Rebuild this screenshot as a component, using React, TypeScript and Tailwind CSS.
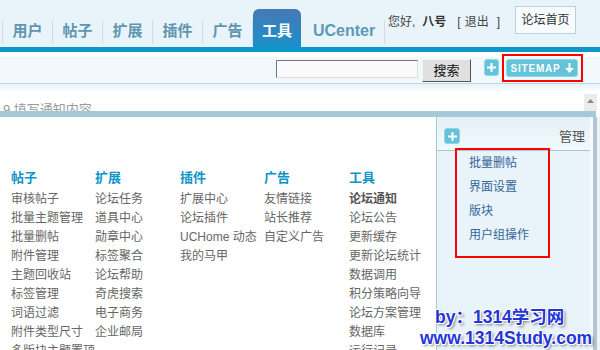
const tabs = ["用户", "帖子", "扩展", "插件", "广告"];

const columns = [
  {
    title: "帖子",
    items: ["审核帖子", "批量主题管理", "批量删帖", "附件管理", "主题回收站", "标签管理", "词语过滤", "附件类型尺寸", "多版块主题置顶"],
  },
  {
    title: "扩展",
    items: ["论坛任务", "道具中心", "勋章中心", "标签聚合", "论坛帮助", "奇虎搜索", "电子商务", "企业邮局"],
  },
  { title: "插件", items: ["扩展中心", "论坛插件", "UCHome 动态", "我的马甲"] },
  { title: "广告", items: ["友情链接", "站长推荐", "自定义广告"] },
  {
    title: "工具",
    items: ["论坛通知", "论坛公告", "更新缓存", "更新论坛统计", "数据调用", "积分策略向导", "论坛方案管理", "数据库", "运行记录"],
  },
];

const panelLinks = ["批量删帖", "界面设置", "版块", "用户组操作"];

function PlusIcon() {
  return (
    <svg width="9" height="9" viewBox="0 0 9 9">
      <rect x="3.5" y="0" width="2" height="9" fill="#fff" />
      <rect x="0" y="3.5" width="9" height="2" fill="#fff" />
    </svg>
  );
}

function Separator() {
  return <span className="mt-[20px] h-[24px] w-px bg-[#cfdde6]" />;
}

function Header() {
  return (
    <div className="flex h-[47px] bg-[#e9f4fa] pl-[2px]">
      {tabs.map((tab) => (
        <div key={tab} className="flex">
          <Separator />
          <div className="flex h-full w-[49px] items-center justify-center pt-[15px] text-[15px] font-bold text-[#6096b0]">
            {tab}
          </div>
        </div>
      ))}
      <Separator />
      <div className="mt-[9px] flex h-[38px] w-[48px] items-center justify-center rounded-t-[6px] bg-[linear-gradient(#4679b6,#1a90ca)] pt-[6px] text-[15px] font-bold text-white">
        工具
      </div>
      <div className="ml-[12px] flex w-[71px] items-center pt-[15px] text-[16px] font-bold text-[#5d9ab5]">UCenter</div>
      <Separator />
      <div className="ml-[3px] mt-[13px] flex h-[17px] items-center whitespace-nowrap text-[12px] text-[#444]">
        <span>您好,</span>
        <b className="ml-[7px] text-[#333]">八号</b>
        <span className="ml-[11px]">[</span>
        <span className="ml-[4px]">退出</span>
        <span className="ml-[8px]">]</span>
      </div>
      <div className="ml-[15px] mt-[6px] flex h-[28px] w-[61px] items-center justify-center border border-[#b3d2de] bg-[#f7fbfd] text-[12px] text-[#333]">
        论坛首页
      </div>
    </div>
  );
}

function Toolbar() {
  return (
    <div className="flex h-[31px] items-start justify-end bg-[linear-gradient(#fff_0_5px,#f0f8fc_5px)] pr-[17px]">
      <div className="mt-[8px] h-[18px] w-[142px] border border-t-[#777] border-l-[#777] border-b-[#ddd] border-r-[#ddd] bg-[#fafafa]" />
      <div className="ml-[4px] mt-[7px] flex h-[23px] w-[49px] items-center justify-center border border-t-[#f4f4f4] border-l-[#f4f4f4] border-b-[#555] border-r-[#555] bg-[#e0e0e0] text-[13px] text-[#111]">
        搜索
      </div>
      <div className="ml-[13px] mt-[7px] flex h-[17px] w-[15px] items-center justify-center rounded-[3px] border border-[#8fd6e6] bg-[#62c3d9]">
        <PlusIcon />
      </div>
      <div className="ml-[3px] mt-[2px] h-[28px] w-[81px] border-2 border-[#ff0000] pl-[2px] pt-[3px]">
        <div className="flex h-[18px] w-[72px] items-center justify-center gap-[4px] rounded-[3px] border border-[#8fd6e6] bg-[#62c3d9]">
          <span className="text-[10px] font-bold tracking-[0.8px] text-white">SITEMAP</span>
          <svg width="9" height="10" viewBox="0 0 9 10">
            <rect x="3.5" y="0" width="2" height="6" fill="#fff" />
            <path d="M0 5 H9 L4.5 10 Z" fill="#fff" />
          </svg>
        </div>
      </div>
    </div>
  );
}

function Notice() {
  return (
    <>
      <div className="h-px bg-[#c3d5e1]" />
      <div className="h-[8px] bg-[linear-gradient(#e5f1f8,#fff)]" />
      <div className="flex h-[19px] justify-between overflow-hidden">
        <div className="pl-[3px] pt-[11px] text-[13px] leading-[13px] text-[#9a9a9a]">9 填写通知内容</div>
        <div className="mr-[3px] mt-[2px] flex h-[17px] w-[13px] justify-center bg-[#ececec] pt-[5px]">
          <svg width="7" height="4" viewBox="0 0 7 4">
            <path d="M0 4 L3.5 0 L7 4 Z" fill="#8a8a8a" />
          </svg>
        </div>
      </div>
      <div className="mr-[4px] h-[6px] bg-[#a7c8d7]" />
    </>
  );
}

function SitemapGrid() {
  return (
    <div className="grid w-[436px] grid-cols-[84px_85px_84px_85px_1fr] pl-[11px] pt-[51px]">
      {columns.map((col) => (
        <div key={col.title} className="flex flex-col whitespace-nowrap">
          <div className="mb-[3px] text-[13px] font-bold leading-[19px] text-[#0e94c8]">{col.title}</div>
          {col.items.map((item) => (
            <div
              key={item}
              className={
                item === "论坛通知"
                  ? "text-[12px] font-bold leading-[19px] text-[#555]"
                  : "text-[12px] leading-[19px] text-[#666]"
              }
            >
              {item}
            </div>
          ))}
        </div>
      ))}
    </div>
  );
}

function ManagePanel() {
  return (
    <div className="flex w-[154px] flex-col border-l border-[#a7c8d7] bg-[#e8f3fa]">
      <div className="flex h-[34px] items-start justify-between border-b border-[#a7c8d7] bg-[linear-gradient(#e4f0f7,#f2f9fc)] pl-[7px] pr-[5px]">
        <div className="mt-[11px] flex h-[16px] w-[16px] items-center justify-center rounded-[3px] border border-[#8fd6e6] bg-[#62c3d9]">
          <PlusIcon />
        </div>
        <span className="mt-[10px] text-[13px] text-[#555]">管理</span>
      </div>
      <div className="-mt-[3px] ml-[18px] h-[110px] w-[95px] border-2 border-[#ff0000] pl-[12px] pt-[1px]">
        {panelLinks.map((link) => (
          <div key={link} className="text-[12px] leading-[24px] text-[#336699]">
            {link}
          </div>
        ))}
      </div>
    </div>
  );
}

export default function App() {
  return (
    <div className="relative h-[350px] w-[600px] overflow-hidden bg-white font-['Liberation_Sans','Noto_Sans_CJK_SC',sans-serif]">
      <Header />
      <div className="h-[5px] bg-[#0a98c9]" />
      <Toolbar />
      <Notice />
      <div className="flex h-[233px]">
        <SitemapGrid />
        <ManagePanel />
        <div className="w-[3px] bg-[#f6fafc]" />
        <div className="w-[4px] bg-[#b2c7d3]" />
        <div className="w-[3px] bg-[#eef3f6]" />
      </div>
      <div className="absolute left-[420px] top-[307px] text-[17.5px] font-bold leading-[21px] text-[#2436d6] [text-shadow:1px_1px_0_#fff,-1px_-1px_0_#fff,1px_-1px_0_#fff,-1px_1px_0_#fff,2px_2px_3px_#777]">
        <div className="pl-[15px]">by：1314学习网</div>
        <div>www.1314Study.com</div>
      </div>
    </div>
  );
}
